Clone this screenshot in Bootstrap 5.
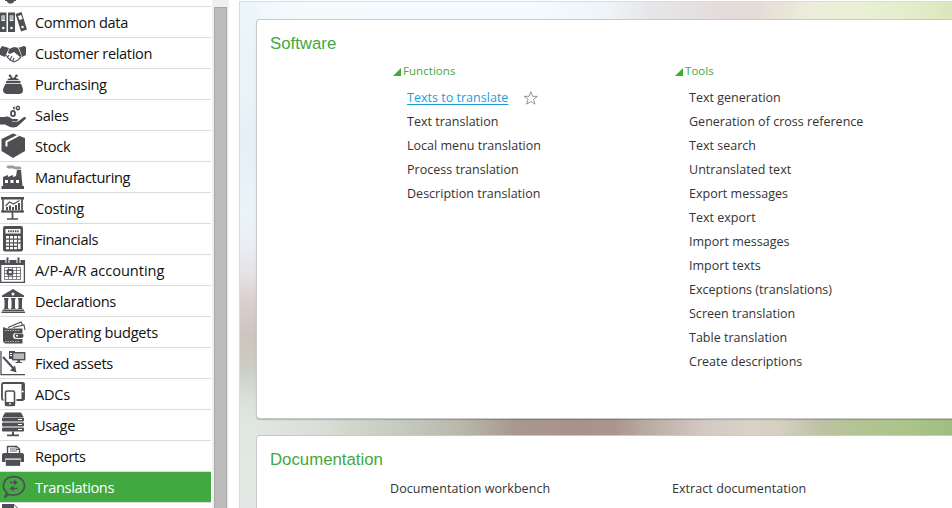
<!DOCTYPE html>
<html lang="en">
<head>
<meta charset="utf-8">
<meta name="viewport" content="width=device-width, initial-scale=1">
<title>Translations</title>
<link href="https://cdn.jsdelivr.net/npm/bootstrap@5.3.0/dist/css/bootstrap.min.css" rel="stylesheet">
<style>
body{font-family:"Open Sans","Noto Sans",sans-serif;color:#333;background:#fff}
.side{width:211px;margin-top:-24px}
.side .list-group-item{height:31px;padding:0 0 1px;border:0;border-bottom:1px solid #dcdcdc;color:#111;font-size:14.6px;letter-spacing:-.36px;line-height:30px;white-space:nowrap}
.side .list-group-item.active{background:#41a940;color:#fff;margin:0}
.side .list-group-item.loose{letter-spacing:-.03px}
.side .list-group-item.mid{letter-spacing:-.25px}
.side svg{width:28px;height:30px;margin-right:7px;fill:#4d4f53;stroke:none;flex:none}
.side .ln{fill:none;stroke:#4d4f53}
.side .w{fill:#fff}
.side .wl{fill:none;stroke:#fff}
.track{width:17px;margin-left:1px;background:#f0f0f0;padding:7px 2px 0}
.thumb{background:#bcbcbc;border:1px solid #a8a8a8;border-bottom:0}
.stage{margin:1px 0 0 10px;padding:17px 0 0 16px;border:1px solid #d8dadb;border-width:1px 0 0 1px;
background:
linear-gradient(#edf6fb 0,#eaf4f8 60px,#e9f4f7 95px,#e5eff8 130px,#e6f0f8 165px,#eaf4f7 205px,#ebf0f5 235px,#e5e4e6 270px,#dacfcc 300px,#cec4be 335px,#cbcdc3 365px,#dadfd9 395px,#e1e8e4 430px,#e3e8e5 506px) 0 0/18px 100% no-repeat,
linear-gradient(90deg,#edf6fb 0,#f5fafd 60px,#f4fafd 300px,#edf3f7 370px,#e6e6e9 410px,#e4dcdb 480px,#e5dcd7 520px,#ededdb 570px,#eaf0d4 620px,#e4edcb 670px,#dce6bc 713px) 0 0/100% 30px no-repeat,
linear-gradient(90deg,#e0e6e1 16px,#dadfd8 75px,#c6cbbf 160px,#b9b8ad 220px,#a9978f 275px,#a8938a 340px,#ab968d 375px,#bdb0a9 415px,#d3cac3 465px,#d9d2c8 510px,#d5d0c0 540px,#bec2a4 580px,#b2c391 625px,#acc58a 665px,#a0bd80 713px) 0 400px/100% 50px no-repeat}
.panel-box{border:1px solid #c9c9c9;border-right:0;border-radius:4px 0 0 4px;background:#fff}
.panel-a{height:400px;margin-bottom:16px;box-shadow:0 1px 1px rgba(0,0,0,.2)}
.panel-b{height:120px}
h1{font:16.8px/20px "Liberation Sans",Arial,sans-serif;color:#41a940;margin:0;padding:14px 0 0 13px}
.groups{padding-top:9px}
.group{font-size:11.5px;letter-spacing:.05px;line-height:16px;color:#41a940;padding-left:136px}
.group svg{width:8px;height:8px;fill:#41a940;margin-right:2px}
.entries{padding:7px 0 0 150px;font-size:12.5px;letter-spacing:.02px;line-height:24px;white-space:nowrap}
.entries a,.docs a{color:#333;text-decoration:none}
.entries a.hot{color:#199fda;text-decoration:underline;text-underline-offset:2px}
.colw{width:282px;flex:none}
.docs{padding:7px 0 0 133px;font-size:12.5px;letter-spacing:.06px;line-height:24px;white-space:nowrap}
.star{width:16px;height:16px;margin:-1px 0 0 15px;fill:#fff;stroke:#8c9199}
</style>
</head>
<body>
<div class="d-flex vh-100 overflow-hidden">
<nav class="side flex-shrink-0">
<div class="list-group list-group-flush">
<a class="list-group-item d-flex"><svg viewBox="0 0 28 30"><path d="M6 21h9l-1 4v1l-2 1.500H9L7 26v-1zM5 23h11v2H5z"/></svg></a>
<a class="list-group-item d-flex"><svg viewBox="0 0 28 30"><path d="M0 5.500h6.500V25H0zM8 5.500h7V25H8zM15.500 7l6-2L27 22.500l-6 2z"/><path class="w" d="M1.500 8.500H5V14H1.500zM9.700 8.500h3.600V14H9.700zM18 9l3.200-1 1.400 4-3.200 1z"/><circle class="w" cx="3.300" cy="21" r="1.300"/><circle class="w" cx="11.500" cy="21" r="1.300"/><circle class="w" cx="22.500" cy="20" r="1.200"/><path class="ln" stroke-width=".8" d="M2 10h3M2 12h3M10 10h3M10 12h3"/></svg>Common data</a>
<a class="list-group-item d-flex"><svg viewBox="0 0 28 30"><path d="M0 11l2-3 7 2-4 9-5-2zM26 9l-2-1-6 2 4 9 4-2zM9 11l5-2 5 1 3 8-2 1-6-5-4 2-2-1z"/><path class="ln" stroke-width="1.100" d="M6 17l4 5 4 2 4-2 3-3M9 17l-2 3M12 18l-2 4M14 20l-1 3"/></svg>Customer relation</a>
<a class="list-group-item d-flex"><svg viewBox="0 0 28 30"><path d="M6 12h14.500v2H6zM5.500 14.700h15.500c1 2.500 2 4.300 2 6.300 0 3-2 4-4 4H7.500c-2 0-4.500-1-4.500-4 0-2 1.500-3.800 2.500-6.300zM7 11.300c1.500-2 3.500-2.500 6-2.500s5 .5 6.500 2.500z"/><path class="ln" stroke-width="1.500" d="M10 6.500l2 3 2.500 1M16.500 6.500l-2 3-2.500 1"/><circle cx="10" cy="6.700" r="1.300"/><circle cx="16.500" cy="6.700" r="1.300"/></svg>Purchasing</a>
<a class="list-group-item mid d-flex"><svg viewBox="0 0 28 30"><path d="M0 17h5c3-1 5 0 7 2h5c1.500 0 1.500 2-.5 2H12v.6h6l6-4.600c2-.5 2.500 1 1.500 2l-6.500 6c-2 2.500-6 3-9 2l-5-2.500H0z"/><ellipse class="ln" stroke-width="1.800" cx="13" cy="13.500" rx="2" ry="2.700"/><ellipse class="ln" stroke-width="1.400" cx="18" cy="8" rx="1.500" ry="1.800"/><ellipse class="ln" stroke-width="1" cx="14.200" cy="8" rx=".8" ry="1.200"/></svg>Sales</a>
<a class="list-group-item mid d-flex"><svg viewBox="0 0 28 30"><path d="M13 2.500L25 7v13l-12 7L1.500 20V8z"/><path class="wl" stroke-width="2" d="M18.500 4.300L6.500 10.500v5"/></svg>Stock</a>
<a class="list-group-item d-flex"><svg viewBox="0 0 28 30"><path d="M3 24V15l5-2v2l5-2v2l3-1 1-6h4l1.500 16H24v3H1.500v-3z"/><path class="w" d="M5 18h3v3H5zM10.500 18h3v3h-3zM16 18h3v3h-3z"/><path fill="#999b9e" d="M8 3.500h5l2 1h4c3 0 3 3 1 3h-4l-3-1H9c-3 0-3-3-1-3z"/></svg>Manufacturing</a>
<a class="list-group-item mid d-flex"><svg viewBox="0 0 28 30"><path d="M1 4h23v2.500H1z"/><path class="ln" stroke-width="1.700" d="M3 6v12.500h19V6M12.500 18v8M7 26h11"/><path d="M1 17.500h23v2H1zM6 14h2v3H6zM9 12.500h2V17H9zM12 14h2v3h-2zM15 12h2v5h-2zM18 10h2v7h-2z"/><path class="ln" stroke-width="1.200" d="M5.500 13l4-4 4 2 6-3.500"/></svg>Costing</a>
<a class="list-group-item d-flex"><svg viewBox="0 0 28 30"><rect x="3" y="2" width="20" height="25.500" rx="2"/><path class="w" d="M5.500 5h15v4.500h-15zM6 12h3v2.500H6zM10 12h3v2.500h-3zM14 12h3v2.500h-3zM18 12h2.500v2.500H18zM6 15.800h3v2.400H6zM10 15.800h3v2.400h-3zM14 15.800h3v2.400h-3zM18 15.800h2.500v2.400H18zM6 19.500h3v2.300H6zM10 19.500h3v2.300h-3zM14 19.500h3v2.300h-3zM18 19.500h2.500V25H18zM6 23h3v2.300H6zM10 23h3v2.300h-3zM14 23h3v2.300h-3z"/><path class="ln" stroke-width="2" stroke-dasharray="1.500 .8" d="M8 7.300h11"/></svg>Financials</a>
<a class="list-group-item loose d-flex"><svg viewBox="0 0 28 30"><path d="M0 5h25v5H0z"/><path class="ln" stroke-width="1.300" d="M.7 6v21.300h23.700V6"/><path class="wl" stroke-width="4" d="M7.500 4v4M18.500 4v4"/><path class="ln" stroke-width="2" d="M7.500 2.500V8M18.500 2.500V8"/><path class="ln" stroke-width=".7" d="M4.500 12.500h16v12h-16zM4.500 15.500h16M4.500 18.500h16M4.500 21.500h16M8.500 12v12M12.500 12v12M16.500 12v12"/><rect class="ln" stroke-width="1.800" x="7.500" y="15" width="5" height="4.500" rx="1"/></svg>A/P-A/R accounting</a>
<a class="list-group-item d-flex"><svg viewBox="0 0 28 30"><path d="M13 3l11 6.500V11H2V9.500zM4 12h4.500v1.500H8V22h.5v1H4v-1h.5v-8.500H4zM11 12h4.500v1.500H15V22h.5v1H11v-1h.5v-8.500H11zM18 12h4.500v1.500H22V22h.5v1H18v-1h.5v-8.500H18zM2.500 23.500h21.500v1.500H2.500zM1.500 25.500H25V27H1.500z"/><circle class="w" cx="13" cy="8" r="1.500"/></svg>Declarations</a>
<a class="list-group-item mid d-flex"><svg viewBox="0 0 28 30"><path d="M3 10l4 1.500h15.500V16H16a2.500 2.500 0 0 0 0 6h6.500v4.500H5l-2-2z"/><rect x="14.500" y="16.500" width="9" height="4.500" rx="2"/><circle class="w" cx="17" cy="18.700" r="1"/><path class="ln" stroke-width="1.100" d="M8 10.500L21 5l1.500 3M13 10.500L24 8l1 5"/><path class="wl" stroke-width=".6" stroke-dasharray="1.500 1" d="M5 13.500h15M5 24.500h15"/></svg>Operating budgets</a>
<a class="list-group-item d-flex"><svg viewBox="0 0 28 30"><path class="ln" stroke-width="1.300" d="M1 3v23.700h24"/><path class="ln" stroke-width="2" d="M3 9l11 12"/><path d="M16.500 24.500l-6.500-2 5-5z"/><rect x="9" y="3" width="6" height="8"/><path class="w" d="M10 5h4v1h-4zM10 7h4v1h-4z"/><rect x="12.700" y="4.700" width="12" height="7" fill="#b8babc" stroke="#4d4f53" stroke-width="1.400"/><path d="M17.500 12h2.500v2h2v1h-6.500v-1h2z"/></svg>Fixed assets</a>
<a class="list-group-item mid d-flex"><svg viewBox="0 0 28 30"><rect class="ln" stroke-width="1.800" x="2" y="4" width="22" height="17" rx="1.500"/><path d="M21.500 4h3v17h-3z"/><circle class="w" cx="22.700" cy="12.500" r="1"/><rect class="w" x="3.500" y="10" width="13" height="18"/><rect class="ln" stroke-width="1.600" x="5.500" y="12" width="9" height="14.500" rx="1.500"/><path d="M5 23h10v4H5z"/><circle class="w" cx="10" cy="24.700" r=".9"/></svg>ADCs</a>
<a class="list-group-item d-flex"><svg viewBox="0 0 28 30"><path d="M5 2.500h16l2.500 4.500H2.500z"/><rect x="2" y="7.500" width="22" height="4" rx="1"/><rect x="2" y="12.500" width="22" height="4" rx="1"/><rect x="2" y="17.500" width="22" height="4" rx="1"/><path d="M12 21.500h2v3h5v1.700H7v-1.700h5z"/><path class="wl" d="M18 9.500h4M18 14.500h4M18 19.500h4"/></svg>Usage</a>
<a class="list-group-item d-flex"><svg viewBox="0 0 28 30"><path d="M4 12h18c1.500 0 2 1 2 2v7h-3.500v-2.500h-15V21H2v-7c0-1 .5-2 2-2z"/><path class="ln" stroke-width="1.400" d="M7.500 12V5.500h9L19.500 8v4M6.500 19.500h13v4.500h-13z"/><path d="M6 20h14v4.500H6z"/><path class="ln" stroke-width=".9" d="M10 8h5M10 10h7M16 5.500V8.500h3"/><path class="wl" d="M5 18h16"/></svg>Reports</a>
<a class="list-group-item active d-flex"><svg viewBox="0 0 28 30"><path class="ln" stroke-width="1.700" d="M4.500 25.500l2.500-4.500C1 16 2.500 5 14 4.700c6.500 0 10.500 4 10.500 9s-5 9.800-11 9.500c-2 0-3.500-.5-4.500-.8z"/><path d="M10 9.700h4V7.800l4 2.700-4 2.700v-1.900h-4zM17.500 15.700h-4v-1.900L9.500 16.500l4 2.700v-1.900h4z"/></svg>Translations</a>
<a class="list-group-item d-flex"><svg viewBox="0 0 28 30"><path d="M2 1h12l5 5v22H2z"/><path class="w" d="M14 2l4 4h-4z"/></svg></a>
</div>
</nav>
<div class="track d-flex flex-shrink-0"><div class="thumb flex-fill"></div></div>
<main class="stage flex-grow-1 overflow-hidden">
<section class="panel-box panel-a">
<h1>Software</h1>
<div class="groups d-flex">
<div class="colw">
<div class="group"><svg viewBox="0 0 8 8"><path d="M8 0v8H0z"/></svg>Functions</div>
<div class="entries d-flex flex-column">
<div class="d-flex align-items-center"><a class="hot">Texts to translate</a><svg class="star" viewBox="0 0 16 15"><path d="M8 1l1.800 4.800h5l-4 3 1.500 5L8 11l-4.300 2.800 1.500-5-4-3h5z"/></svg></div>
<a>Text translation</a><a>Local menu translation</a><a>Process translation</a><a>Description translation</a>
</div>
</div>
<div class="colw">
<div class="group"><svg viewBox="0 0 8 8"><path d="M8 0v8H0z"/></svg>Tools</div>
<div class="entries d-flex flex-column">
<a>Text generation</a><a>Generation of cross reference</a><a>Text search</a><a>Untranslated text</a><a>Export messages</a><a>Text export</a><a>Import messages</a><a>Import texts</a><a>Exceptions (translations)</a><a>Screen translation</a><a>Table translation</a><a>Create descriptions</a>
</div>
</div>
</div>
</section>
<section class="panel-box panel-b">
<h1>Documentation</h1>
<div class="docs d-flex"><a class="colw">Documentation workbench</a><a class="colw">Extract documentation</a></div>
</section>
</main>
</div>
<script src="https://cdn.jsdelivr.net/npm/bootstrap@5.3.0/dist/js/bootstrap.bundle.min.js"></script>
</body>
</html>
